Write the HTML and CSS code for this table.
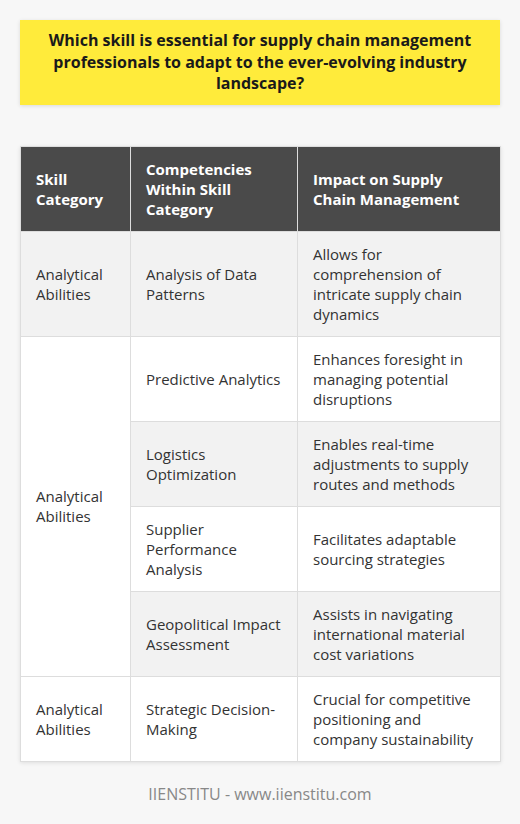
FILE: index.html
```html
<!DOCTYPE html>
<html>
<head>
<meta charset="utf-8">
<link rel="stylesheet" href="styles.css">
</head>
<body>
<div class="page">
  <div class="title">Which skill is essential for supply chain management professionals to adapt to the ever-evolving industry landscape?</div>
  <table class="grid">
    <colgroup><col class="c1"><col class="c2"><col class="c3"></colgroup>
    <thead>
      <tr><th>Skill Category</th><th>Competencies Within Skill Category</th><th>Impact on Supply Chain Management</th></tr>
    </thead>
    <tbody>
      <tr class="alt"><td>Analytical Abilities</td><td>Analysis of Data Patterns</td><td>Allows for comprehension of intricate supply chain dynamics</td></tr>
      <tr><td rowspan="4">Analytical Abilities</td><td>Predictive Analytics</td><td>Enhances foresight in managing potential disruptions</td></tr>
      <tr class="alt"><td>Logistics Optimization</td><td>Enables real-time adjustments to supply routes and methods</td></tr>
      <tr><td>Supplier Performance Analysis</td><td>Facilitates adaptable sourcing strategies</td></tr>
      <tr class="alt"><td>Geopolitical Impact Assessment</td><td>Assists in navigating international material cost variations</td></tr>
      <tr><td>Analytical Abilities</td><td>Strategic Decision-Making</td><td>Crucial for competitive positioning and company sustainability</td></tr>
    </tbody>
  </table>
  <div class="footer">IIENSTITU - www.iienstitu.com</div>
</div>
</body>
</html>
```

FILE: styles.css
```css
html, body {
  margin: 0;
  padding: 0;
  background: #f7f7f7;
}
body {
  font-family: "Open Sans", "Liberation Sans", sans-serif;
  color: #333;
}
.page {
  padding: 20px;
}
.title {
  background: #ffeb3b;
  color: #1a1a1a;
  font-weight: 700;
  font-size: 16px;
  line-height: 21.5px;
  text-align: center;
  padding: 10px 20px;
  box-shadow: 0 1px 4px rgba(0,0,0,0.12);
}
.grid {
  margin-top: 41px;
  width: 480px;
  border-collapse: collapse;
  table-layout: fixed;
  background: #fff;
  box-shadow: 0 1px 4px rgba(0,0,0,0.1);
  font-size: 15px;
  line-height: 20px;
}
.c1 { width: 110px; }
.c2 { width: 167px; }
.c3 { width: 203px; }
.grid th, .grid td {
  border: 1px solid #dddddd;
  padding: 12px 15px;
  text-align: left;
  vertical-align: middle;
}
.grid th {
  background: #4a4a4a;
  color: #fff;
  font-weight: 700;
}
.grid tr.alt td {
  background: #f2f2f2;
}
.footer {
  text-align: center;
  color: #888;
  font-size: 16px;
  line-height: 22px;
  margin-top: 21px;
}
```
